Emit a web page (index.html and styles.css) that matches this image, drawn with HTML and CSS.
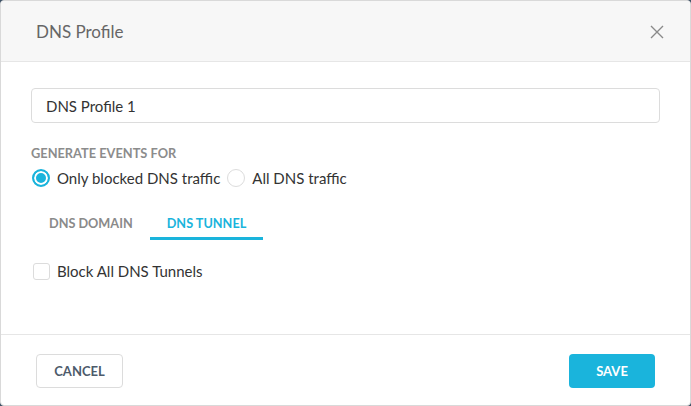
FILE: index.html
```html
<!DOCTYPE html>
<html>
<head>
<meta charset="utf-8">
<link rel="stylesheet" href="styles.css">
</head>
<body>
<div class="dialog">
  <div class="header">
    <div class="title">DNS Profile</div>
    <button class="close" aria-label="Close">
      <svg width="14" height="14" viewBox="0 0 14 14"><path d="M1 1L13 13M13 1L1 13" stroke="#8a8a8a" stroke-width="1.4" fill="none"/></svg>
    </button>
  </div>
  <div class="body">
    <div class="input">DNS Profile 1</div>
    <div class="label">GENERATE EVENTS FOR</div>
    <div class="radios">
      <label class="radio"><span class="dot checked"></span>Only blocked DNS traffic</label>
      <label class="radio"><span class="dot"></span>All DNS traffic</label>
    </div>
    <div class="tabs">
      <div class="tab">DNS DOMAIN</div>
      <div class="tab active">DNS TUNNEL</div>
    </div>
    <label class="check"><span class="box"></span>Block All DNS Tunnels</label>
  </div>
  <div class="footer">
    <button class="btn cancel">CANCEL</button>
    <button class="btn save">SAVE</button>
  </div>
</div>
</body>
</html>
```

FILE: styles.css
```css
* { box-sizing: border-box; }
html, body { margin: 0; padding: 0; }
body {
  background: #3d5165;
  width: 691px;
  height: 406px;
  font-family: Lato, "Noto Sans", sans-serif;
}
.dialog {
  width: 691px;
  height: 406px;
  background: #fff;
  border: 1px solid #d9d9d9;
  border-radius: 4px;
  display: flex;
  flex-direction: column;
  overflow: hidden;
}
.header {
  height: 61px;
  background: #f7f7f7;
  border-bottom: 1px solid #e6e6e6;
  display: flex;
  align-items: center;
  justify-content: space-between;
  padding: 0 26px 0 35px;
  flex: none;
}
.title {
  font-size: 17px;
  color: #666;
  padding-top: 1px;
}
.close {
  background: none;
  border: 0;
  padding: 0;
  width: 14px;
  height: 14px;
  display: flex;
  margin-top: 1px;
}
.body {
  flex: 1;
  padding: 26px 30px 0 30px;
  display: flex;
  flex-direction: column;
  align-items: flex-start;
}
.input {
  width: 629px;
  height: 35px;
  border: 1px solid #dcdcdc;
  border-radius: 4px;
  padding: 0 14px;
  display: flex;
  align-items: center;
  font-size: 15px;
  color: #333;
}
.label {
  margin-top: 22px;
  font-size: 12.8px;
  font-weight: bold;
  color: #8c8c8c;
  line-height: 16px;
}
.radios {
  margin-top: 7px;
  display: flex;
  gap: 7px;
}
.radio {
  display: flex;
  align-items: center;
  font-size: 15px;
  color: #333;
  line-height: 20px;
}
.dot {
  width: 18px;
  height: 18px;
  border-radius: 50%;
  border: 1px solid #dcdcdc;
  margin-right: 7px;
  display: inline-block;
  background: #fff;
}
.dot.checked {
  border: 2px solid #1ab4dc;
  box-shadow: inset 0 0 0 2px #fff;
  background: #1ab4dc;
}
.radio:first-child .dot { margin-left: 1px; }
.tabs {
  margin-top: 26px;
  margin-left: 1px;
  display: flex;
}
.tab {
  font-size: 12.7px;
  font-weight: bold;
  color: #8a8a8a;
  padding: 0 17px;
  height: 26px;
  line-height: 18px;
  border-bottom: 3px solid transparent;
}
.tab.active {
  color: #1ab4dc;
  border-bottom-color: #1ab4dc;
}
.check {
  margin-top: 21px;
  margin-left: 2px;
  display: flex;
  align-items: center;
  font-size: 15px;
  color: #333;
  line-height: 20px;
}
.box {
  width: 17px;
  height: 17px;
  border: 1px solid #dcdcdc;
  border-radius: 3px;
  margin-right: 7px;
  display: inline-block;
}
.footer {
  height: 71px;
  border-top: 1px solid #e6e6e6;
  display: flex;
  align-items: center;
  justify-content: space-between;
  padding: 0 35px 0 35px;
  flex: none;
}
.btn {
  height: 34px;
  border-radius: 4px;
  font-family: Lato, "Noto Sans", sans-serif;
  font-size: 13px;
  font-weight: bold;
  padding: 0;
  margin-top: 2px;
}
.cancel {
  width: 87px;
  background: #fff;
  border: 1px solid #dcdcdc;
  color: #4d5b6b;
}
.save {
  width: 86px;
  background: #1ab4dc;
  border: 0;
  color: #fff;
}
```
